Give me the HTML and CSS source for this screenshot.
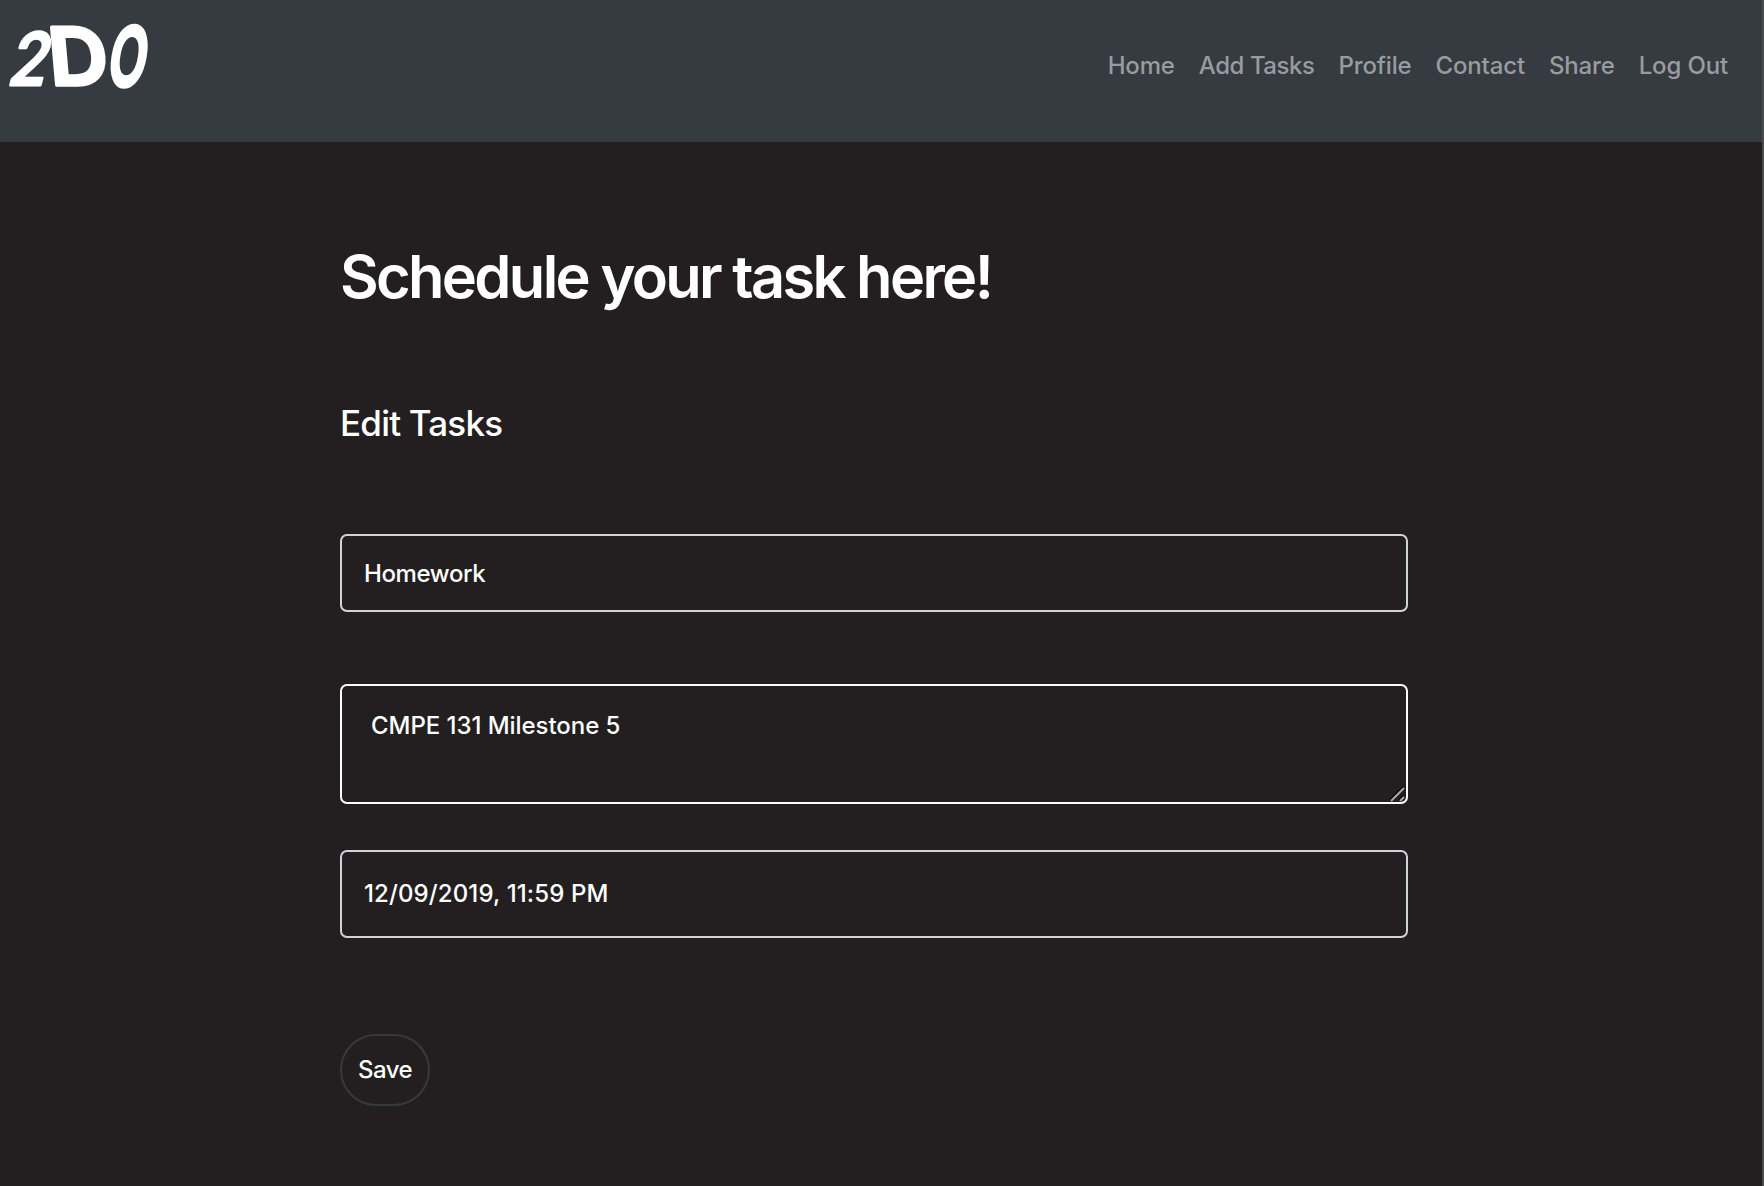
FILE: index.html
```html
<!DOCTYPE html>
<html lang="en">
<head>
<meta charset="utf-8">
<title>2DO</title>
<link rel="stylesheet" href="styles.css">
</head>
<body>
<header class="navbar">
  <a class="brand" aria-label="2DO">
    <svg class="logo" width="160" height="100" viewBox="0 0 160 100">
      <text class="logo-two" transform="translate(6 85) skewX(-14) scale(.98 1.13)">2</text>
      <text class="logo-d" transform="translate(51 84.5) skewX(5) scale(1.28 1.24)">D</text>
      <text class="logo-o" transform="translate(105.5 86) skewX(-9) scale(.77 1.28)">O</text>
    </svg>
  </a>
  <nav class="links">
    <a>Home</a><a class="tight">Add Tasks</a><a>Profile</a><a>Contact</a><a>Share</a><a>Log Out</a>
  </nav>
</header>
<main class="content">
  <h1 class="title">Schedule your task here!</h1>
  <h2 class="subtitle">Edit Tasks</h2>
  <form class="form">
    <input class="field name" type="text" value="Homework">
    <div class="details-wrap">
      <textarea class="field details">CMPE 131 Milestone 5</textarea>
      <svg class="grip" width="15" height="15" viewBox="0 0 15 15">
        <path class="grip-shadow" d="M0 13 13 0M9 13l4-4"/>
        <path class="grip-line" d="M1 14 14 1M10 14l4-4"/>
      </svg>
    </div>
    <input class="field due" type="text" value="12/09/2019, 11:59 PM">
    <button class="save" type="button">Save</button>
  </form>
</main>
</body>
</html>
```
FILE: styles.css
```css
* { box-sizing: border-box; }
body {
  margin: 0;
  height: 1186px;
  overflow: hidden;
  background: #231f20;
  border-right: 2px solid #4a4d4e;
  color: #fff;
  font-family: Inter, "Liberation Sans", sans-serif;
  font-size: 24px;
}
.navbar {
  display: flex;
  justify-content: space-between;
  height: 142px;
  padding-right: 22px;
  background: #363a41;
}
.logo { display: block; overflow: visible; }
.logo text {
  fill: #fff;
  stroke: #fff;
  stroke-linejoin: round;
  font-family: Inter, sans-serif;
  font-size: 64px;
}
.logo-two { font-weight: 500; stroke-width: 2.5px; }
.logo-d { font-weight: 600; stroke-width: 3px; }
.logo-o { font-weight: 600; stroke-width: 3px; }
.links {
  display: flex;
  height: 130px;
  align-items: center;
  color: #999c9f;
  font-weight: 500;
  letter-spacing: -.15px;
}
.links a { padding: 0 12px; }
.links .tight { letter-spacing: -.45px; }
.content { width: 1068px; margin-left: 340px; }
.title {
  margin: 0;
  padding-top: 98px;
  font-size: 59.5px;
  font-weight: 600;
  line-height: 73px;
  letter-spacing: -2.65px;
}
.subtitle {
  margin: 88px 0 0;
  font-size: 35px;
  font-weight: 500;
  line-height: 44px;
  letter-spacing: -.8px;
}
.form { display: flex; flex-direction: column; align-items: flex-start; margin-top: 89px; }
.field {
  display: block;
  width: 100%;
  margin: 0;
  padding: 0 22px;
  border: 2px solid #ced4da;
  border-radius: 7px;
  background: transparent;
  color: #fff;
  font: inherit;
  font-weight: 500;
  outline: none;
}
.name { height: 78px; letter-spacing: -.4px; }
.details-wrap { position: relative; width: 100%; margin-top: 72px; }
.details {
  height: 120px;
  padding: 22px 28px 22px 29px;
  border-color: #fff;
  line-height: 36px;
  letter-spacing: -.05px;
  resize: none;
}
.grip { position: absolute; right: 3px; bottom: 2px; }
.grip path { fill: none; stroke-width: 2px; }
.grip-shadow { stroke: #090808; }
.grip-line { stroke: #aaa8a8; }
.due { height: 88px; margin-top: 46px; padding-bottom: 2px; letter-spacing: .12px; }
.save {
  width: 90px;
  height: 72px;
  margin-top: 96px;
  padding: 0 0 2px;
  border: 2px solid #343a40;
  border-radius: 36px;
  background: transparent;
  color: #fff;
  font: inherit;
  font-weight: 500;
  letter-spacing: -.55px;
}
```
